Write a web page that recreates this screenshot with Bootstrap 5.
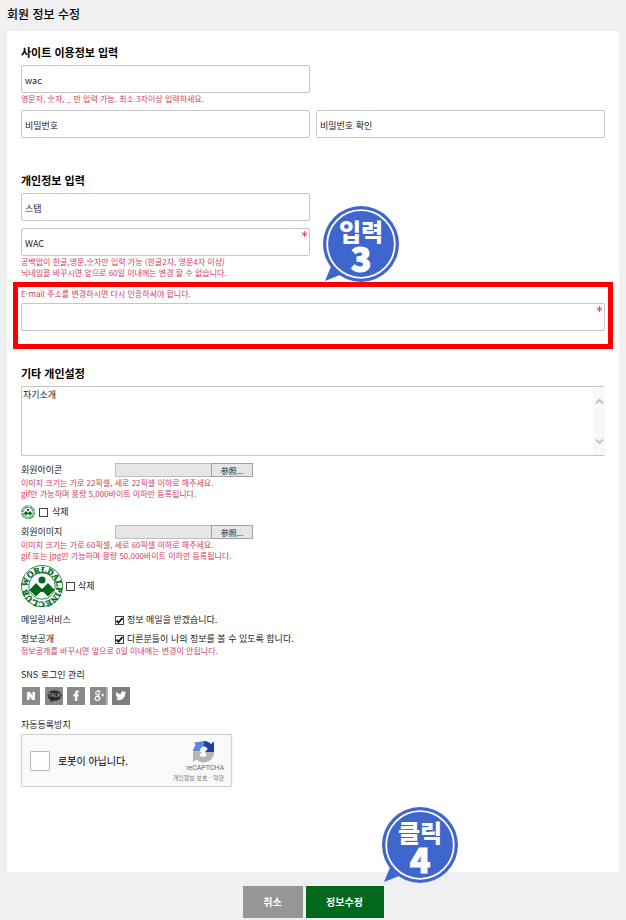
<!DOCTYPE html>
<html lang="ko">
<head>
<meta charset="utf-8">
<meta name="viewport" content="width=device-width, initial-scale=1">
<title>회원 정보 수정</title>
<link href="https://cdn.jsdelivr.net/npm/bootstrap@5.3.0/dist/css/bootstrap.min.css" rel="stylesheet">
<style>
body{background:#f0f0f0;color:#000;font-family:"Noto Sans CJK KR","Noto Sans",sans-serif;font-size:9px;line-height:12px}
.page-title{font:500 12px/17px "Noto Sans CJK KR",sans-serif;padding:5px 7px 9px}
.panel{background:#fff;margin:0 7px;padding:13px 14px 85px}
.sec-title{font:700 11px/16px "Noto Sans CJK KR",sans-serif;margin:0 0 5px}
.sec-personal{margin-top:34px}
.pair{--bs-gutter-x:6px;--bs-gutter-y:0}
.gap-row{margin-top:7px}
.gap-row-sm{margin-top:6px}
.field{display:block;width:100%;height:28px;border:1px solid #c6c6c6;border-radius:2px;padding:2px 3px 0;font-size:9px;line-height:12px;color:#222;background:#fff}
.field::placeholder{color:#222;opacity:1}
.hint{color:#d13a62;font-size:8px;line-height:11px;margin:0}
.req{top:3px;right:3px;width:5px;height:6px}
.mark-box{border:5px solid #f00;margin:4px -8px 0;padding:1px 3px 13px}
.memo{height:70px;padding:2px 1px;resize:none;border-right:0;overflow:hidden}
.scroll-rail{top:1px;right:0;bottom:1px;width:12px;background:#f8f8f8;padding:11px 0 10px}
.lbl{color:#222}
.lbl-col{width:94px;flex:none}
.file-name{width:96px;height:14px;border:1px solid #bdbdbd;border-right:0;border-radius:0;background:#e6e6e6;padding:0}
.file-btn{width:42px;height:14px;border:1px solid #a0a0a0;border-radius:0;background:#e6e6e6;color:#222;font:8px/11px "Noto Sans CJK JP",sans-serif;padding:0}
.tick{appearance:none;width:9px;height:9px;margin:0;border:1px solid #444;background:#fff center/9px 9px no-repeat;flex:none}
.tick:checked{background-image:url("data:image/svg+xml,%3Csvg xmlns='http://www.w3.org/2000/svg' viewBox='0 0 9 9'%3E%3Cpath d='M1.5 4.5l2 2.200L7.5 2' fill='none' stroke='%23000' stroke-width='1.7'/%3E%3C/svg%3E")}
.gap-tick{gap:3px}
.sns-title{padding:13px 0 6px}
.sns-list{width:109px;padding-left:1px}
.sns{width:18px;height:18px;display:block}
.robot-title{padding:14px 0 3px}
.robot{width:211px;height:53px;background:#f9f9f9;border:1px solid #d0d0d0;border-radius:2px;box-shadow:0 0 2px rgba(0,0,0,.1);padding:0 7px 0 8px}
.robot-tick{appearance:none;width:20px;height:20px;margin:0;border:1px solid #b8b8b8;border-radius:1px;background:#fff}
.robot-name{font-size:10px;line-height:14px}
.robot-brand{font:7px/9px Roboto,sans-serif;color:#666}
.robot-links{font-size:6px;line-height:9px;color:#777}
.robot-links a{color:inherit;text-decoration:none}
.foot{gap:3px;padding:14px 0 3px}
.act{height:32px;border:0;border-radius:0;color:#fff;font-weight:700;font-size:10px;line-height:14px;padding:0}
.act-cancel{width:60px;background:#969696}
.act-save{width:78px;background:#00691d}
.callout{width:76px;height:78px;pointer-events:none}
.callout text{font-family:"Noto Sans CJK KR",sans-serif;font-weight:900;fill:#fff;text-anchor:middle}
.callout .step-no{stroke:#fff;stroke-width:1px}
.call-input{left:302px;top:34px}
.call-click{left:76px;bottom:33px}
</style>
</head>
<body>
<svg class="d-none" aria-hidden="true">
<symbol id="emblem" viewBox="0 0 84 84">
<circle cx="42" cy="42" r="41" fill="#fff" stroke="#00691d" stroke-width="1.600"/>
<circle cx="42" cy="42" r="26.500" fill="none" stroke="#00691d" stroke-width="1.600"/>
<path id="ring" d="M13 44A29 29 0 1 1 13 44.500" fill="none"/>
<text font-family="Liberation Serif" font-weight="700" font-size="17" fill="#00691d" stroke="#00691d" stroke-width=".8"><textPath href="#ring">WORLDALPINECLUB</textPath></text>
<circle cx="42" cy="30" r="7" fill="#00691d"/>
<path d="M30 36l12 12 12-12 13 14-13 13-6-6a7 7 0 0 0-12 0l-6 6-13-13z" fill="#00691d"/>
</symbol>
<symbol id="star" viewBox="0 0 5 6"><path d="M2.5 0v6M0 1.5l5 3M5 1.5l-5 3" stroke="#f0505a" stroke-width="1" fill="none"/></symbol>
<symbol id="bubble" viewBox="0 0 76 78"><path d="M9 58L2 75l15-6z" fill="#3f66cc"/><circle cx="38" cy="38" r="38" fill="#3f66cc"/><circle cx="38" cy="38" r="33.800" fill="none" stroke="#fff" stroke-width="1.800"/></symbol>
</svg>

<form>
<h1 class="page-title mb-0">회원 정보 수정</h1>
<main class="panel">
<section>
<h2 class="sec-title">사이트 이용정보 입력</h2>
<div class="row pair"><div class="col-6"><input class="field" type="text" value="wac" aria-label="아이디"></div></div>
<p class="hint">영문자, 숫자, _ 만 입력 가능. 최소 3자이상 입력하세요.</p>
<div class="row pair gap-row-sm">
<div class="col-6"><input class="field" type="password" placeholder="비밀번호" aria-label="비밀번호"></div>
<div class="col-6"><input class="field" type="password" placeholder="비밀번호 확인" aria-label="비밀번호 확인"></div>
</div>
</section>

<section class="position-relative sec-personal">
<h2 class="sec-title">개인정보 입력</h2>
<div class="row pair"><div class="col-6"><input class="field" type="text" value="스탭" aria-label="이름"></div></div>
<div class="row pair gap-row"><div class="col-6"><div class="position-relative"><input class="field" type="text" value="WAC" aria-label="닉네임" required><svg class="req position-absolute"><use href="#star"/></svg></div></div></div>
<p class="hint">공백없이 한글,영문,숫자만 입력 가능 (한글2자, 영문4자 이상)<br>닉네임을 바꾸시면 앞으로 60일 이내에는 변경 할 수 없습니다.</p>
<svg class="callout call-input position-absolute"><use href="#bubble"/><text x="38" y="35" font-size="24">입력</text><text class="step-no" x="38" y="66" font-size="34">3</text></svg>
<div class="mark-box">
<label class="hint d-block" for="mail">E-mail 주소를 변경하시면 다시 인증하셔야 합니다.</label>
<div class="position-relative mt-1"><input class="field" id="mail" type="email" required><svg class="req position-absolute"><use href="#star"/></svg></div>
</div>
</section>

<section>
<h2 class="sec-title mt-3">기타 개인설정</h2>
<div class="position-relative"><textarea class="field memo" aria-label="자기소개">자기소개</textarea>
<div class="scroll-rail position-absolute d-flex flex-column justify-content-between align-items-center">
<svg width="9" height="7" viewBox="0 0 9 7"><path d="M1 5.500L4.500 2 8 5.500" fill="none" stroke="#c2c2c2" stroke-width="2"/></svg>
<svg width="9" height="7" viewBox="0 0 9 7"><path d="M1 1.500L4.500 5 8 1.500" fill="none" stroke="#c2c2c2" stroke-width="2"/></svg>
</div></div>

<div class="d-flex align-items-center gap-row"><label class="lbl lbl-col" for="icon-file">회원아이콘</label><input class="file-name" id="icon-file" type="text" readonly><button class="file-btn" type="button">参照...</button></div>
<p class="hint">이미지 크기는 가로 22픽셀, 세로 22픽셀 이하로 해주세요.<br>gif만 가능하며 용량 5,000바이트 이하만 등록됩니다.</p>
<div class="d-flex align-items-center gap-1 gap-row-sm"><svg width="14" height="14"><use href="#emblem"/></svg><input class="tick" type="checkbox" id="del-icon"><label class="lbl" for="del-icon">삭제</label></div>

<div class="d-flex align-items-center gap-row-sm"><label class="lbl lbl-col" for="image-file">회원이미지</label><input class="file-name" id="image-file" type="text" readonly><button class="file-btn" type="button">参照...</button></div>
<p class="hint">이미지 크기는 가로 60픽셀, 세로 60픽셀 이하로 해주세요.<br>gif 또는 jpg만 가능하며 용량 50,000바이트 이하만 등록됩니다.</p>
<div class="d-flex align-items-center gap-tick pt-1"><svg width="42" height="42"><use href="#emblem"/></svg><input class="tick" type="checkbox" id="del-image"><label class="lbl" for="del-image">삭제</label></div>

<div class="d-flex align-items-center gap-row"><span class="lbl lbl-col">메일링서비스</span><div class="d-flex align-items-center gap-tick"><input class="tick" type="checkbox" id="mailing" checked><label class="lbl" for="mailing">정보 메일을 받겠습니다.</label></div></div>
<div class="d-flex align-items-center gap-row"><span class="lbl lbl-col">정보공개</span><div class="d-flex align-items-center gap-tick"><input class="tick" type="checkbox" id="open" checked><label class="lbl" for="open">다른분들이 나의 정보를 볼 수 있도록 합니다.</label></div></div>
<p class="hint">정보공개를 바꾸시면 앞으로 0일 이내에는 변경이 안됩니다.</p>

<div class="lbl sns-title">SNS 로그인 관리</div>
<div class="d-flex justify-content-between sns-list">
<button type="button" class="btn p-0 border-0" aria-label="Naver"><svg class="sns" viewBox="0 0 18 18"><path fill="#8a8a8a" d="M0 0h18v18H0z"/><path d="M5 5h3l2.500 3.800V5H13v8h-2.800L7.600 9.200V13H5z" fill="#fff"/></svg></button>
<button type="button" class="btn p-0 border-0" aria-label="Kakao"><svg class="sns" viewBox="0 0 18 18"><path fill="#8a8a8a" d="M0 0h18v18H0z"/><ellipse cx="9.500" cy="8.500" rx="7" ry="5.200" fill="#2c2c2c"/><path d="M6 12l-.5 3.500L9.500 13z" fill="#2c2c2c"/><text x="9.500" y="10.300" font-family="Liberation Sans" font-weight="700" font-size="5" text-anchor="middle" fill="#999">TALK</text></svg></button>
<button type="button" class="btn p-0 border-0" aria-label="Facebook"><svg class="sns" viewBox="0 0 18 18"><path fill="#8a8a8a" d="M0 0h18v18H0z"/><path d="M8 14V9.500H6.300V7.300H8V6c0-1.900 1.100-2.700 3.800-2.400v1.900c-1.200-.1-1.500.1-1.500.9v.9h1.500l-.3 2.200h-1.200V14z" fill="#fff"/></svg></button>
<button type="button" class="btn p-0 border-0" aria-label="Google Plus"><svg class="sns" viewBox="0 0 18 18"><path fill="#8a8a8a" d="M0 0h18v18H0z"/><path d="M17 0v18" stroke="#ddd"/><g fill="none" stroke="#fff" stroke-width="1.100"><ellipse cx="7.500" cy="6" rx="1.800" ry="2"/><ellipse cx="7.500" cy="11.500" rx="2.500" ry="1.900"/><path d="M7.500 4h3M8 8l1 2M11.200 8h3M12.700 6.500v3"/></g></svg></button>
<button type="button" class="btn p-0 border-0" aria-label="Twitter"><svg class="sns" viewBox="0 0 18 18"><path fill="#7d7d7d" d="M0 0h18v18H0z"/><path d="M4.300 5c1.300 1.400 2.700 2 4.600 2.100C8.500 5.500 9.700 4.300 11 4.300c.7 0 1.200.3 1.600.7l1.400-.5-.9 1.300 1.200-.3-1.200 1.300c.1 4.200-3.200 6.400-6.100 6.400-1.400 0-2.400-.3-3.300-.9 1.200 0 2.100-.3 2.800-.9-1-.1-1.600-.6-1.900-1.400h.9c-1.100-.4-1.600-1.100-1.600-2.100l.9.200C4 7.400 3.800 6 4.300 5z" fill="#fff"/></svg></button>
</div>

<div class="lbl robot-title">자동등록방지</div>
<div class="robot d-flex align-items-center">
<input class="robot-tick" type="checkbox" id="robot"><label class="robot-name ms-2" for="robot">로봇이 아닙니다.</label>
<div class="ms-auto d-flex flex-column align-items-end"><svg class="me-2" width="24" height="24" viewBox="0 0 24 24"><path d="M1 11.500c0-2.500 1-4.500 2.500-6L2.500 2.500 12 1v5.500c-2.500 0-4 2-4.200 5z" fill="#5a86dd"/><path d="M12 1c3 0 5 1 7 3l3-2.500V12h-9l2.700-3C15 7.500 14 6.500 12 6.500z" fill="#1f41a8"/><path d="M1 12h9l-2.500 2.800c1.500 3 5.500 3 7.500.2l-2-3h9c0 9.500-11.500 14-17.500 7.500L1 22z" fill="#b4b4b4"/></svg>
<span class="robot-brand">reCAPTCHA</span><span class="robot-links"><a href="#">개인정보 보호</a> - <a href="#">약관</a></span></div>
</div>
</section>
</main>
<footer class="d-flex justify-content-center foot">
<button class="act act-cancel" type="button">취소</button>
<div class="position-relative"><button class="act act-save" type="submit">정보수정</button>
<svg class="callout call-click position-absolute"><use href="#bubble"/><text x="38" y="35" font-size="24">클릭</text><text class="step-no" x="38" y="66" font-size="34">4</text></svg></div>
</footer>
</form>
<script src="https://cdn.jsdelivr.net/npm/bootstrap@5.3.0/dist/js/bootstrap.bundle.min.js"></script>
</body>
</html>
